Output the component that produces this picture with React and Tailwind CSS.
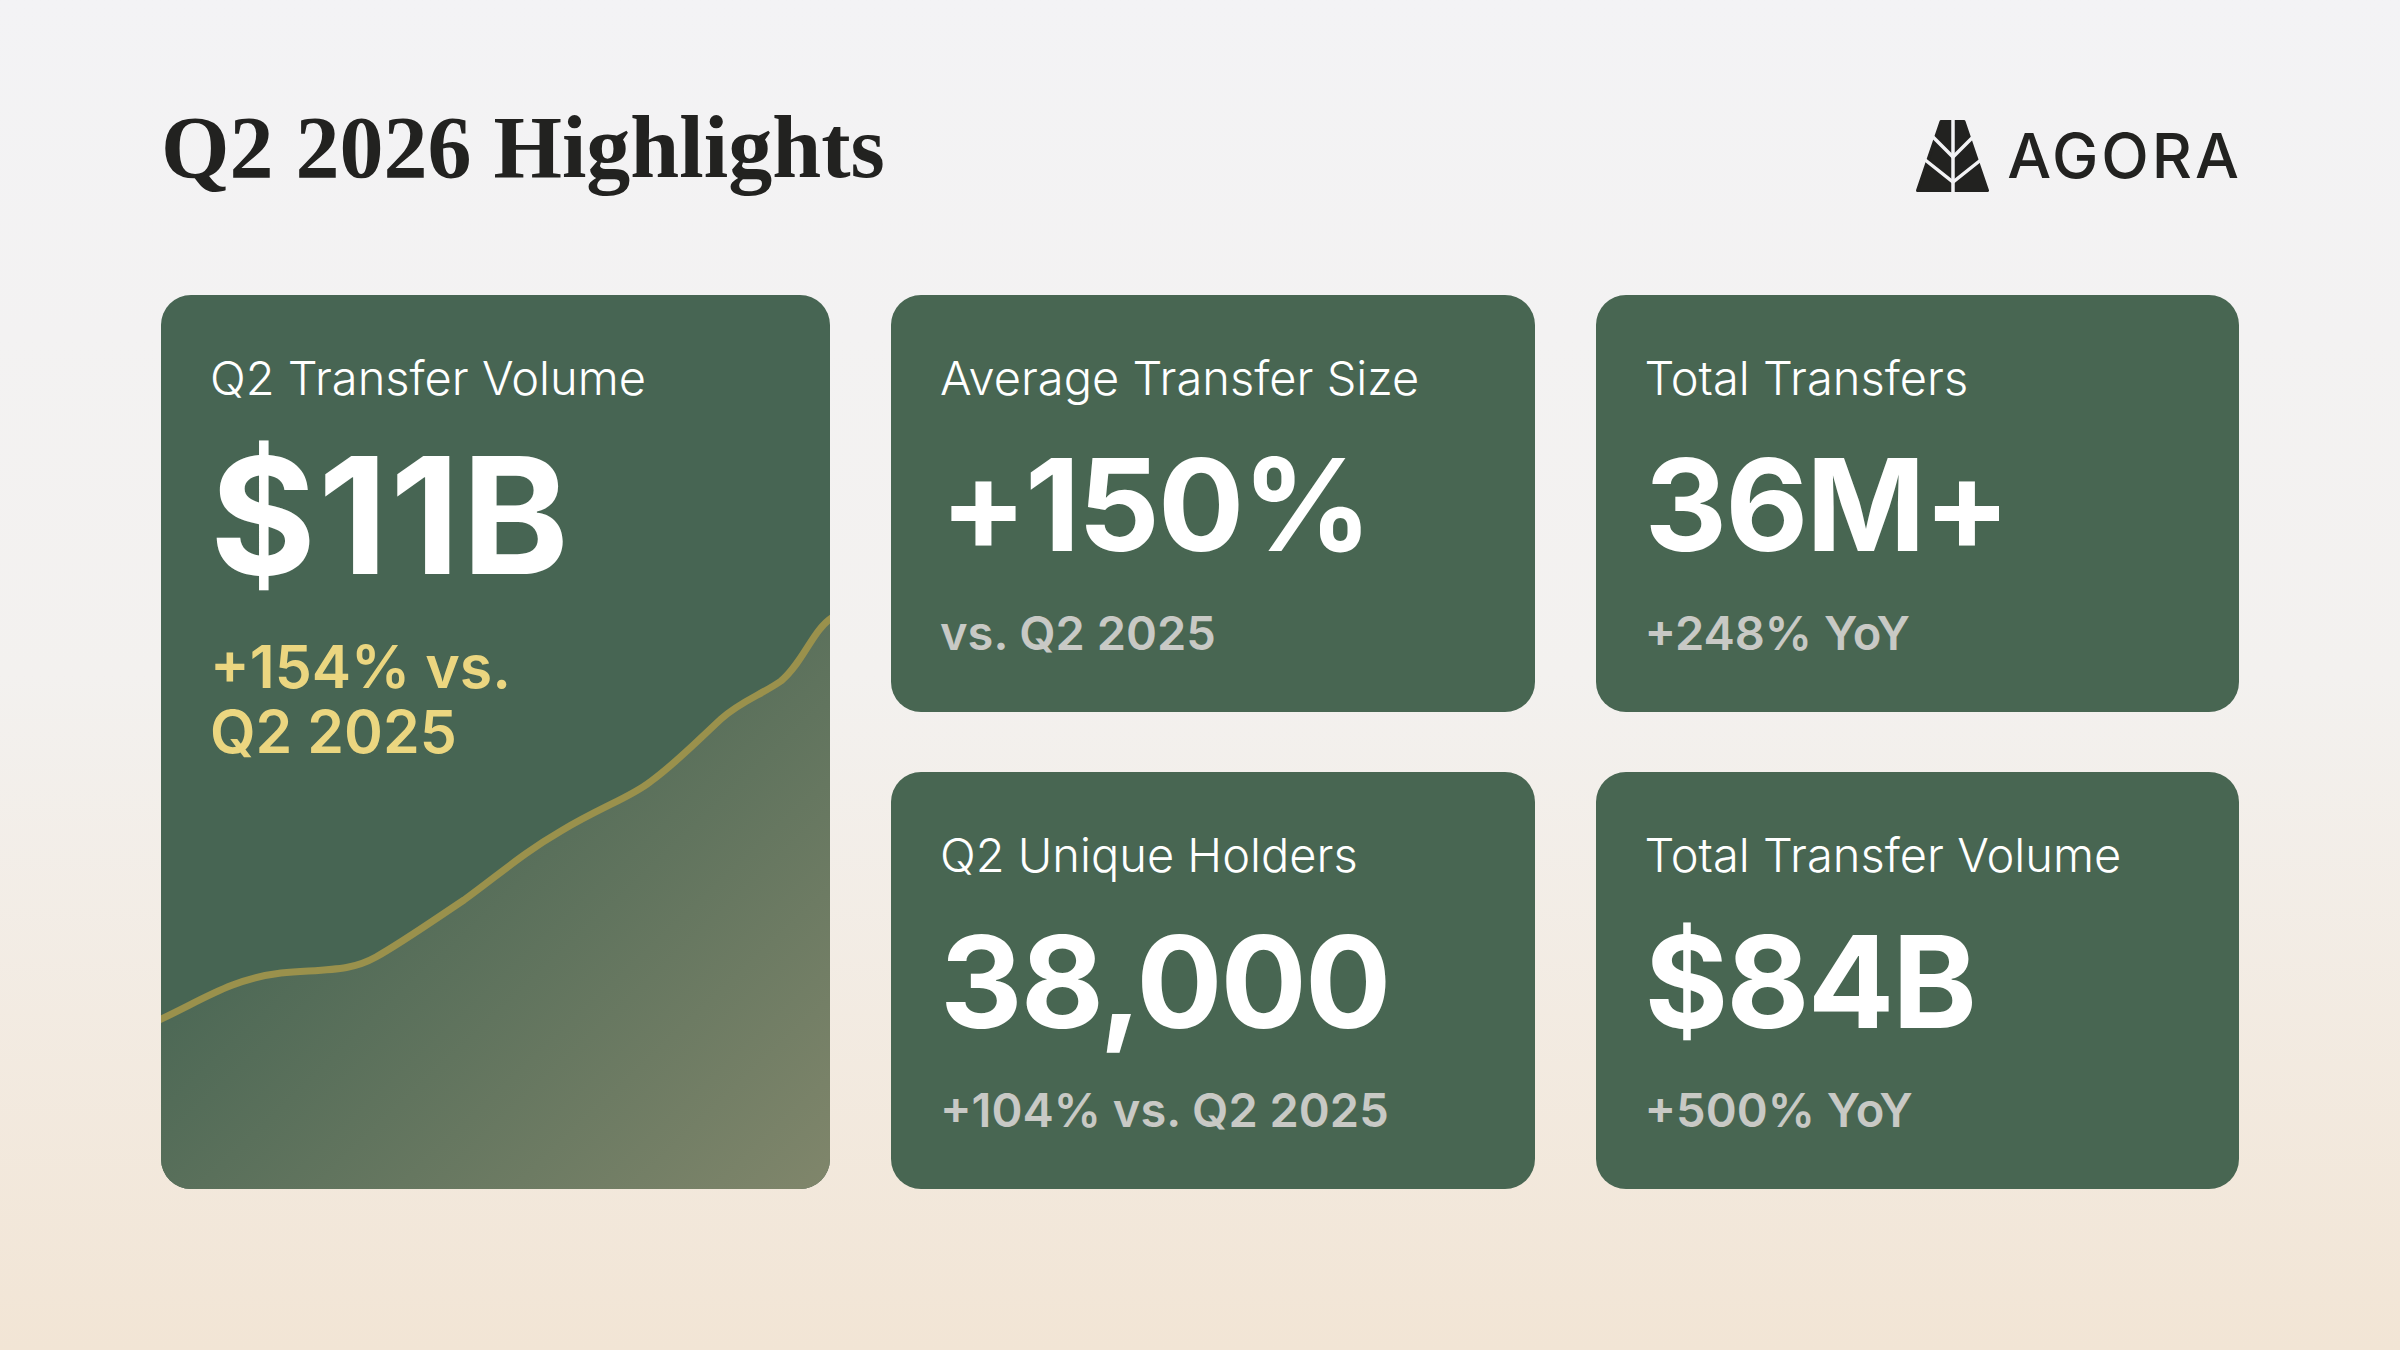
import React from "react";

const stats = [
  { label: "Average Transfer Size", value: "+150%", note: "vs. Q2 2025" },
  { label: "Total Transfers", value: "36M+", note: "+248% YoY" },
  { label: "Q2 Unique Holders", value: "38,000", note: "+104% vs. Q2 2025" },
  { label: "Total Transfer Volume", value: "$84B", note: "+500% YoY" },
];

const AgoraMark = () => (
  <svg width="73" height="72" viewBox="0 0 73 72" fill="none">
    <path d="M25 1.5 L48 1.5 L71.5 70.5 L1.5 70.5 Z" fill="#222220" stroke="#222220" strokeWidth="3" strokeLinejoin="round" />
    <g stroke="#f3f3f5" strokeWidth="3.5" strokeLinecap="butt">
      <path d="M37 -2 V74" />
      <path d="M17 17 L37 37 L57 17" />
      <path d="M8 39 L37 62 L66 39" />
    </g>
  </svg>
);

const Chart = () => (
  <svg className="absolute inset-0" width="669" height="894" viewBox="0 0 669 894" fill="none">
    <defs>
      <linearGradient id="area" gradientUnits="userSpaceOnUse" x1="220" y1="420" x2="669" y2="894">
        <stop offset="0" stopColor="#476553" />
        <stop offset="1" stopColor="#80866b" />
      </linearGradient>
    </defs>
    <path
      d="M-4 726 C40 706 70 684 120 678 C170 674 190 676 215 662 C240 648 270 627 303 605 C340 578 362 558 400 536 C440 512 470 502 489 487 C515 468 532 450 560 424 C580 406 600 400 620 386 C642 368 652 334 672 322 L672 900 L-4 900 Z"
      fill="url(#area)"
    />
    <path
      d="M-4 726 C40 706 70 684 120 678 C170 674 190 676 215 662 C240 648 270 627 303 605 C340 578 362 558 400 536 C440 512 470 502 489 487 C515 468 532 450 560 424 C580 406 600 400 620 386 C642 368 652 334 672 322"
      stroke="#9a914c"
      strokeWidth="7"
      strokeLinecap="round"
    />
  </svg>
);

const StatCard = ({ label, value, note }) => (
  <div className="flex flex-col rounded-[30px] bg-[#486652] px-[49px] pt-[59px]">
    <p className="text-[47px] leading-none font-light text-white">{label}</p>
    <p className="mt-[40px] text-[128px] leading-none font-bold tracking-[-2px] text-white">{value}</p>
    <p className="mt-[40px] text-[47px] leading-none font-semibold text-[#c8c9c5]">{note}</p>
  </div>
);

const App = () => {
  return (
    <div className="h-[1350px] w-full overflow-hidden bg-linear-to-b from-[#f3f3f5] via-[#f3f1ef] to-[#f2e5d5] px-[161px] pt-[104px] font-['Inter',sans-serif]">
      <header className="flex items-start justify-between">
        <h1 className="text-[88px] leading-none font-bold text-[#222220] font-['Liberation_Serif',serif]">
          Q2 2026 Highlights
        </h1>
        <div className="mt-[16px] flex items-center gap-[18px]">
          <AgoraMark />
          <span className="-mr-[3px] text-[62px] leading-none font-medium tracking-[3px] text-[#222220]">AGORA</span>
        </div>
      </header>

      <div className="mt-[103px] grid h-[894px] grid-cols-[669px_1fr_1fr] grid-rows-2 gap-x-[61px] gap-y-[60px]">
        {/* big card with chart */}
        <div className="relative row-span-2 overflow-hidden rounded-[30px] bg-[#476553]">
          <Chart />
          <div className="relative flex flex-col px-[49px] pt-[59px]">
            <p className="text-[47px] leading-none font-light text-white">Q2 Transfer Volume</p>
            <p className="mt-[33px] text-[162px] leading-none font-bold tracking-[2px] text-white">$11B</p>
            <p className="mt-[38px] text-[59px] leading-[65px] font-semibold text-[#ebd680]">
              +154% vs.
              <br />
              Q2 2025
            </p>
          </div>
        </div>
        {stats.map((s) => (
          <StatCard key={s.label} {...s} />
        ))}
      </div>
    </div>
  );
};

export default App;
